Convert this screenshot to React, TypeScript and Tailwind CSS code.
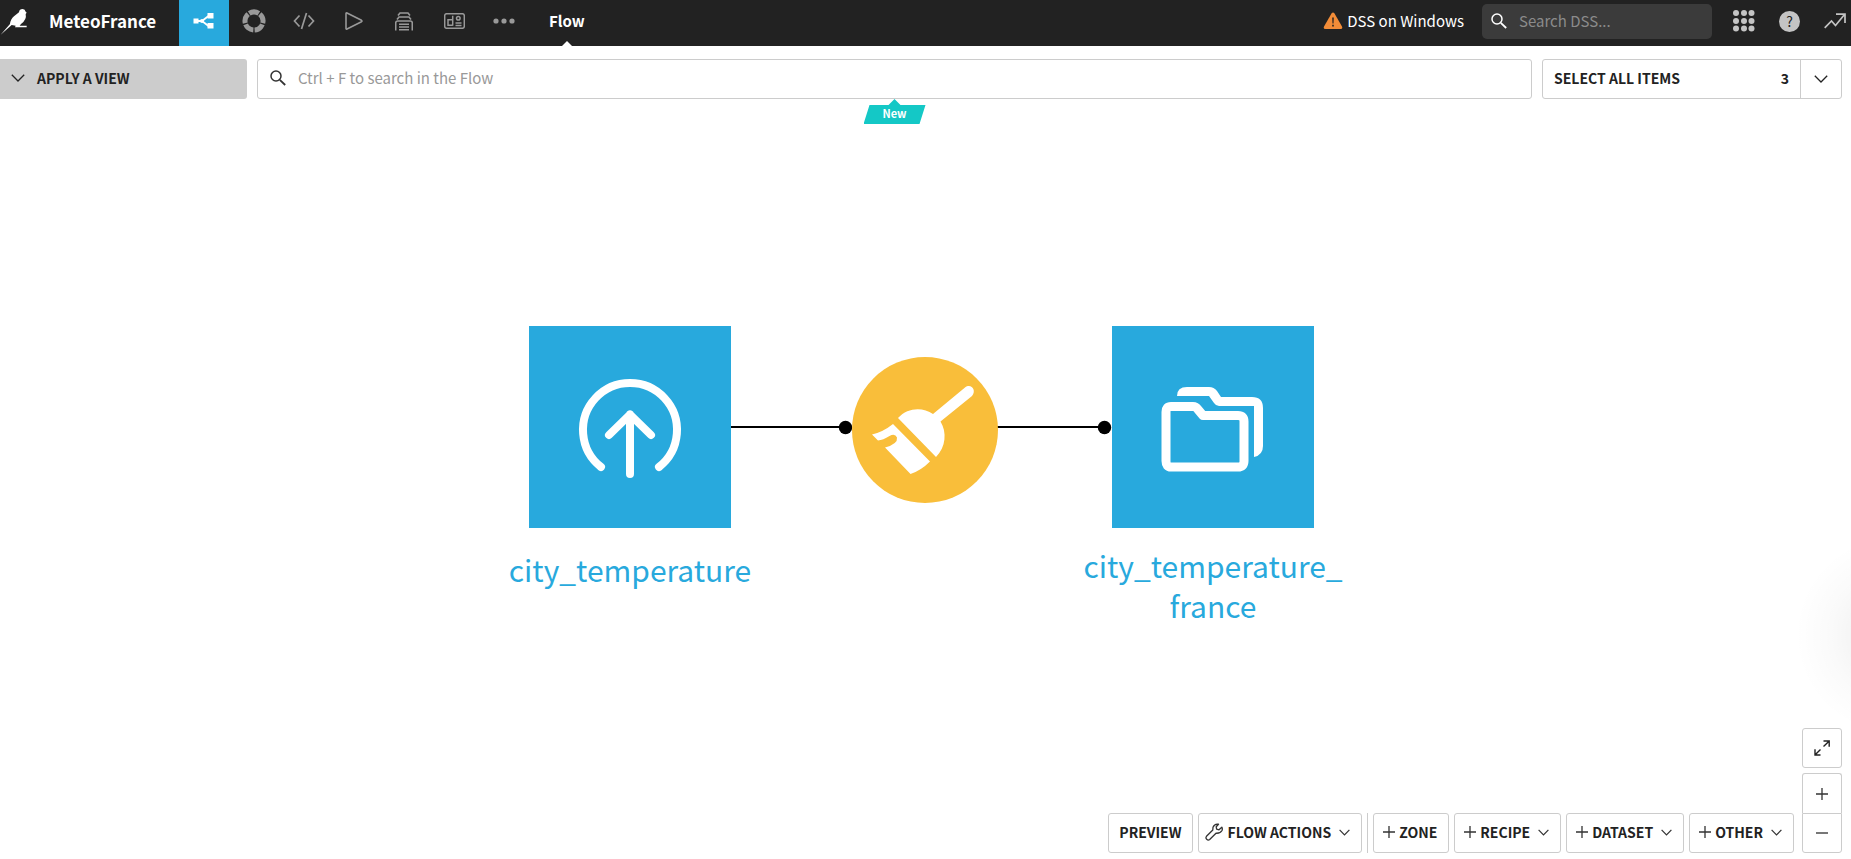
import type { ReactNode } from "react";

function Chevron({ className = "" }: { className?: string }) {
  return (
    <svg viewBox="0 0 14 8" className={className} fill="none" stroke="currentColor" strokeWidth="1.3" aria-hidden="true">
      <path d="M.8.8 7 7 13.2.8" />
    </svg>
  );
}

function SmallChevron() {
  return (
    <svg viewBox="0 0 11 7" className="ml-2 h-[7px] w-[11px] shrink-0" fill="none" stroke="#333" strokeWidth="1.2" aria-hidden="true">
      <path d="M.6.8l4.9 5.2L10.400.8" />
    </svg>
  );
}

function Plus() {
  return (
    <svg viewBox="0 0 12 12" className="size-3 shrink-0" fill="none" stroke="#333" strokeWidth="1.3" aria-hidden="true">
      <path d="M0 6h12M6 0v12" />
    </svg>
  );
}

function Magnifier({ className = "" }: { className?: string }) {
  return (
    <svg viewBox="0 0 16 16" className={className} fill="none" stroke="currentColor" aria-hidden="true">
      <circle cx="6" cy="6" r="5" strokeWidth="1.5" />
      <path d="m9.8 9.8 5.4 5.2" strokeWidth="1.8" />
    </svg>
  );
}

const tabs: { name: string; icon: ReactNode }[] = [
  {
    name: "Flow",
    icon: (
      <svg viewBox="0 0 22 16" className="h-4 w-[22px]" fill="white" aria-hidden="true">
        <path d="M.5 5.500h5v5h-5zM14.500 0h6v5.500h-6zM14.500 10h6v5.500h-6z" />
        <circle cx="9" cy="8" r="2" />
        <path d="M5 8h4l6.500-5M9 8l6.500 5" fill="none" stroke="white" strokeWidth="1.800" />
      </svg>
    ),
  },
  {
    name: "Datasets",
    icon: (
      <svg viewBox="0 0 24 24" className="size-6" fill="none" stroke="#999" strokeWidth="5" aria-hidden="true">
        <circle cx="12" cy="12" r="9" pathLength="50" strokeDasharray="8.900 1.100" transform="rotate(-50 12 12)" />
      </svg>
    ),
  },
  {
    name: "Code",
    icon: (
      <svg viewBox="0 0 22 18" className="h-[18px] w-[22px]" fill="none" stroke="#999" strokeWidth="1.700" aria-hidden="true">
        <path d="M6.500 3.500 1.500 9l5 5.500M15.500 3.500l5 5.500-5 5.500M13.500 1l-5 16" />
      </svg>
    ),
  },
  {
    name: "Jobs",
    icon: (
      <svg viewBox="0 0 18 18" className="size-[18px]" fill="none" stroke="#999" strokeWidth="1.600" strokeLinejoin="round" aria-hidden="true">
        <path d="M1 1.500Q1 .5 2 1l14.500 7.300q1 .7 0 1.400L2 17q-1 .5-1-.5z" />
      </svg>
    ),
  },
  {
    name: "Automation",
    icon: (
      <svg viewBox="0 0 18 19" className="h-[19px] w-[18px]" fill="none" stroke="#999" strokeWidth="1.600" aria-hidden="true">
        <path d="M3 3.500 5 1h8l2 2.500M2 7.500 4 5h10l2 2.500M.7 18.500V11q0-2 2-2h12.600q2 0 2 2v7.500M4 12.200h10M4 15h10M4 17.800h10" />
      </svg>
    ),
  },
  {
    name: "Dashboards",
    icon: (
      <svg viewBox="0 0 21 16" className="h-4 w-[21px]" fill="none" stroke="#999" strokeWidth="1.500" aria-hidden="true">
        <rect x=".7" y=".7" width="19.600" height="14.600" rx="2" />
        <path d="M8.700 2.800v10M8.700 12.300H4V6.800h4.700M11.500 10h6M11.500 12.500h6" />
        <circle cx="14.300" cy="5.200" r="1.800" />
      </svg>
    ),
  },
  {
    name: "More",
    icon: (
      <svg viewBox="0 0 22 6" className="h-1.5 w-[22px]" fill="#999" aria-hidden="true">
        <circle cx="3" cy="3" r="2.600" />
        <circle cx="11" cy="3" r="2.600" />
        <circle cx="19" cy="3" r="2.600" />
      </svg>
    ),
  },
];

function Header() {
  return (
    <header className="flex h-[46px] items-center bg-[#222] text-white">
      <a href="#home" aria-label="Home" className="flex w-[49px] shrink-0 self-start">
        <svg viewBox="0 0 84 108" className="h-9 w-7" fill="white" aria-hidden="true">
          <path d="M2 104 30 72Q32 57 42 49L57 37Q58 27 68 27 76 28 76 34L80 38 77 42Q81 59 63 72L59 77H80V82H45L47 77 35 75Z" />
        </svg>
      </a>
      <a href="#project" className="w-[130px] shrink-0 pb-1 text-[17px] font-bold">
        MeteoFrance
      </a>
      <nav className="flex h-full shrink-0">
        {tabs.map((t, i) => (
          <button
            key={t.name}
            type="button"
            aria-label={t.name}
            className={`flex h-full w-[50px] items-center justify-center pb-1 ${i === 0 ? "bg-[#28a9dd]" : ""}`}
          >
            {t.icon}
          </button>
        ))}
      </nav>
      <a href="#flow" className="relative ml-5 flex h-full items-center pb-1 text-[15px] font-bold">
        Flow
        <svg viewBox="0 0 10 5" className="absolute bottom-0 left-1/2 h-[5px] w-2.5 -translate-x-1/2" fill="white" aria-hidden="true">
          <path d="M0 5 5 0l5 5z" />
        </svg>
      </a>
      <div className="ml-auto flex shrink-0 items-center pr-[5px] pb-1">
        <svg viewBox="0 0 20 18" className="mr-1 h-[18px] w-5" aria-hidden="true">
          <path d="M8.500 1.500q1.500-2 3 0l7.500 13q1 2.500-1.500 2.500h-15Q0 17 1 14.500z" fill="#f28c38" />
          <path d="M9.200 5.500h1.600l-.3 6h-1zM9.200 12.800h1.600v1.700H9.200z" fill="#222" />
        </svg>
        <span className="mr-[18px] text-[15px]">DSS on Windows</span>
        <label className="mr-[21px] flex h-[35px] w-[230px] items-center gap-3 rounded-[5px] bg-[#3b3b3b] px-[9px]">
          <Magnifier className="size-4 shrink-0" />
          <input
            type="text"
            aria-label="Search DSS"
            placeholder="Search DSS..."
            className="w-full min-w-0 bg-transparent text-[15px] outline-none placeholder:text-[#8b8b8b]"
          />
        </label>
        <button type="button" aria-label="Applications" className="mr-6">
          <svg viewBox="0 0 22 22" className="size-[22px]" fill="#c4c4c4" aria-hidden="true">
            {[3, 11, 18.5].map((y) => [3, 11, 18.5].map((x) => <circle key={`${x}-${y}`} cx={x} cy={y} r="3" />))}
          </svg>
        </button>
        <button
          type="button"
          aria-label="Help"
          className="mr-6 flex size-[21px] items-center justify-center rounded-full bg-[#c4c4c4] text-sm text-[#222]"
        >
          ?
        </button>
        <button type="button" aria-label="Activity">
          <svg viewBox="0 0 22 16" className="h-4 w-[22px]" fill="none" stroke="#c4c4c4" strokeWidth="1.700" aria-hidden="true">
            <path d="M.7 14.800 7.500 8l4 4.500L20.500 1.500M12 1.200h9V10" />
          </svg>
        </button>
      </div>
    </header>
  );
}

function FilterBar() {
  return (
    <div className="flex gap-2.5 pt-[13px] pr-[9px] text-sm text-[#222]">
      <button type="button" className="flex h-10 w-[247px] shrink-0 items-center gap-3 rounded-r-[3px] bg-[#ccc] pb-0.5 pl-[11px] font-bold">
        <Chevron className="h-2 w-3.5" />
        APPLY A VIEW
      </button>
      <div className="relative flex-1">
        <label className="flex h-10 items-center gap-3 rounded-[3px] border border-[#ccc] px-3 pb-0.5">
          <Magnifier className="size-4 shrink-0 text-[#333]" />
          <input
            type="text"
            aria-label="Search in the Flow"
            placeholder="Ctrl + F to search in the Flow"
            className="w-full min-w-0 text-[15px] outline-none placeholder:text-[#999]"
          />
        </label>
        <div className="absolute top-full left-1/2 flex h-[25px] w-[62px] -translate-x-1/2 justify-center bg-[#14c8c6] pt-1.5 text-[11px] leading-4 font-bold text-white [clip-path:polygon(6px_6px,25px_6px,31px_0,37px_6px,100%_6px,56px_100%,0_100%)]">
          New
        </div>
      </div>
      <div className="flex h-10 w-[300px] shrink-0 rounded-[3px] border border-[#ccc] font-bold">
        <button type="button" className="flex flex-1 items-center justify-between px-[11px] pb-0.5">
          <span>SELECT ALL ITEMS</span>
          <span>3</span>
        </button>
        <button type="button" aria-label="Selection options" className="flex w-[41px] items-center justify-center border-l border-[#ccc]">
          <Chevron className="h-2 w-3.5" />
        </button>
      </div>
    </div>
  );
}

function Diagram() {
  return (
    <div className="relative mx-auto mt-[227px] h-[300px] w-[785px]">
      <svg viewBox="0 0 785 202" className="absolute top-0 left-0 h-[202px] w-[785px]" aria-hidden="true">
        <path d="M202 101h115M468 101h108" stroke="black" strokeWidth="2" />
        <circle cx="316.500" cy="101.500" r="6.700" />
        <circle cx="575.500" cy="101.500" r="6.700" />
      </svg>
      <button type="button" className="absolute top-0 left-0 flex w-[202px] flex-col items-center text-[#28a9dd]">
        <svg viewBox="0 0 202 202" className="size-[202px] bg-[#28a9dd]" fill="none" stroke="white" strokeWidth="8" strokeLinecap="round" strokeLinejoin="round" aria-hidden="true">
          <path d="M72 141A47 47 0 1 1 130 141M101 148V88.500M80 109 101 88.500l21 20.500" />
        </svg>
        <span className="mt-[21px] text-3xl leading-10">city_temperature</span>
      </button>
      <button type="button" aria-label="Prepare recipe" className="absolute top-[31px] left-[323px]">
        <svg viewBox="0 0 146 146" className="size-[146px]" aria-hidden="true">
          <circle cx="73" cy="73" r="73" fill="#f9be3a" />
          <g fill="white">
            <path d="M46 61C56 50 71 50 81 57L113 30.500C119 26 125 33 120 39L88.500 64.500C95 75 94 90 84 100Z" />
            <path d="M20 77.500Q31 75 41 67L78 104.500Q69 113.500 58.500 117L33 90.500Q46 87 45 80.500 43 76 37.500 79 31 83 26 83.500Z" />
          </g>
        </svg>
      </button>
      <button type="button" className="absolute top-0 right-0 flex w-[202px] flex-col items-center text-[#28a9dd]">
        <svg viewBox="0 0 202 202" className="size-[202px] bg-[#28a9dd]" aria-hidden="true">
          <path d="M59 80.500H81Q84 80.500 86 83.500L91 89.500H126Q132 89.500 132 95.500V135Q132 141 126 141H59Q54 141 54 135V86Q54 80.500 59 80.500Z" fill="none" stroke="white" strokeWidth="9" strokeLinejoin="round" />
          <path d="M65 70Q65 61 75 61H97Q102 61 105 65L109 71H140Q151 71 151 82V120Q151 129 142 131V80H107Q104 80 102 77L97 70Z" fill="white" />
        </svg>
        <span className="mt-[17px] text-3xl leading-10">
          city_temperature_
          <br />
          france
        </span>
      </button>
    </div>
  );
}

const box = "flex h-10 items-center rounded-[3px] border border-[#ccc] bg-white";

function AddButton({ label, menu = true }: { label: string; menu?: boolean }) {
  return (
    <button type="button" className={`${box} pr-[11px] pb-0.5 pl-[9px]`}>
      <Plus />
      <span className="ml-1">{label}</span>
      {menu && <SmallChevron />}
    </button>
  );
}

function Toolbar() {
  return (
    <div className="flex items-end justify-end gap-[5px] pr-[9px] pb-1.5 text-sm font-bold text-[#222]">
      <button type="button" className={`${box} px-2.5 pb-0.5`}>PREVIEW</button>
      <button type="button" className={`${box} pr-[11px] pb-0.5 pl-1.5`}>
        <svg viewBox="0 0 18 18" className="mr-[5px] size-[18px]" fill="none" stroke="#333" strokeWidth="1.300" strokeLinejoin="round" aria-hidden="true">
          <path d="M13.500 1.200Q9.500.5 8 4.200L7.800 7 1.500 13.300Q.3 15 1.700 16.300 3.200 17.700 4.700 16.500L11 10.200Q15.500 10.500 17 7.500 17.700 5.500 16.800 4.200L14 6.800 11.600 6.200 11.200 3.800Z" />
        </svg>
        FLOW ACTIONS
        <SmallChevron />
      </button>
      <div className="h-10 w-px bg-[#ccc]" />
      <AddButton label="ZONE" menu={false} />
      <AddButton label="RECIPE" />
      <AddButton label="DATASET" />
      <AddButton label="OTHER" />
      <div className="ml-[3px] w-10">
        <button type="button" aria-label="Fit to screen" className={`${box} mb-[5px] w-full justify-center`}>
          <svg viewBox="0 0 16 16" className="size-4" fill="none" stroke="#222" strokeWidth="1.400" aria-hidden="true">
            <path d="M9.500 1h5.700v5.700M15 1.200 9.500 6.500M1 9.200V15h5.500M1.200 14.800 6.500 9.500" />
          </svg>
        </button>
        <button type="button" aria-label="Zoom in" className={`${box} w-full justify-center rounded-b-none border-b-0`}>
          <Plus />
        </button>
        <button type="button" aria-label="Zoom out" className={`${box} w-full justify-center rounded-t-none`}>
          <svg viewBox="0 0 12 2" className="h-0.5 w-3" fill="#777" aria-hidden="true">
            <path d="M0 0h12v2H0z" />
          </svg>
        </button>
      </div>
    </div>
  );
}

export default function App() {
  return (
    <div className="relative flex min-h-screen flex-col overflow-hidden bg-white font-['Noto_Sans_CJK_SC',sans-serif]">
      <Header />
      <FilterBar />
      <main className="flex-1 pr-2">
        <Diagram />
      </main>
      <Toolbar />
      <div className="pointer-events-none absolute top-[535px] right-0 h-[200px] w-14 bg-[radial-gradient(circle_100px_at_calc(100%_+_44px)_100px,rgba(0,0,0,0.08),rgba(0,0,0,0.02)_65%,transparent)]" />
    </div>
  );
}
